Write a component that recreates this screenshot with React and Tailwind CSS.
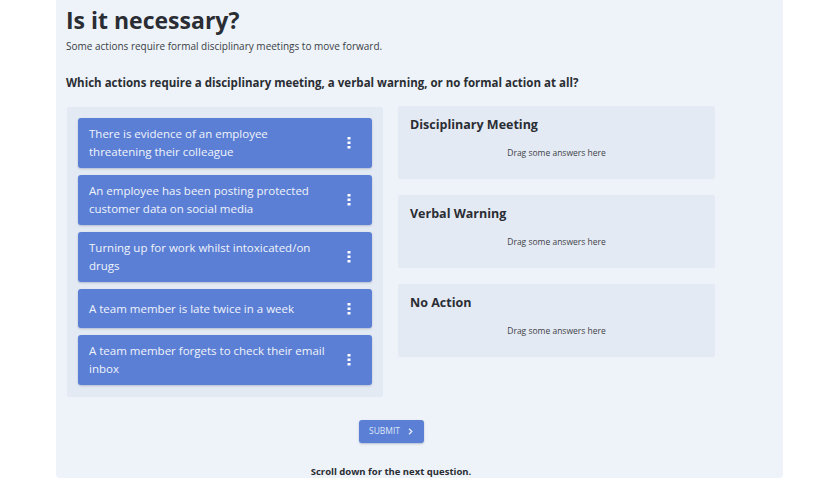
const items = [
  'There is evidence of an employee threatening their colleague',
  'An employee has been posting protected customer data on social media',
  'Turning up for work whilst intoxicated/on drugs',
  'A team member is late twice in a week',
  'A team member forgets to check their email inbox',
];

const buckets = ['Disciplinary Meeting', 'Verbal Warning', 'No Action'];

function Dots() {
  return (
    <svg width="4" height="12" viewBox="0 0 4 12" className="shrink-0">
      <rect x="0.5" y="0" width="3" height="2.5" fill="#ffffff" />
      <rect x="0.5" y="4.5" width="3" height="2.5" fill="#ffffff" />
      <rect x="0.5" y="9" width="3" height="2.5" fill="#ffffff" />
    </svg>
  );
}

export default function App() {
  return (
    <div className="h-[480px] w-[840px] bg-white font-['Open_Sans',sans-serif] text-[#2b2f36]">
      <div className="ml-[56px] h-[478px] w-[727px] rounded-b-[4px] bg-[#eef3f9] pl-[10px] pt-[4px]">
        <h1 className="text-[23px] font-bold leading-[32px] text-[#2a2d33]">Is it necessary?</h1>
        <p className="mt-[3px] text-[10px] leading-[14px] text-[#3a3e45]">
          Some actions require formal disciplinary meetings to move forward.
        </p>
        <p className="mt-[22px] text-[11.5px] font-bold leading-[16px] text-[#2a2d33]">
          Which actions require a disciplinary meeting, a verbal warning, or no formal action at all?
        </p>

        <div className="mt-[16px] ml-[1px] flex items-start gap-[15px]">
          <div className="flex w-[316px] flex-col gap-[7px] rounded-[2px] bg-[#e4eaf3] p-[11px] pb-[12px]">
            {items.map((text) => (
              <div
                key={text}
                className="flex min-h-[39px] items-center justify-between rounded-[3px] bg-[#5b7fd5] py-[7px] pl-[11px] pr-[21px] shadow-[0_1px_2px_rgba(40,60,110,0.25)]"
              >
                <span className="w-[238px] text-[11.5px] leading-[18px] text-[#f1f4fb]">{text}</span>
                <Dots />
              </div>
            ))}
          </div>

          <div className="-mt-[1px] flex w-[317px] flex-col gap-[16px]">
            {buckets.map((title) => (
              <div key={title} className="h-[73px] rounded-[2px] bg-[#e4eaf3] px-[12px] pt-[11px]">
                <div className="text-[12.5px] font-bold leading-[16px] text-[#2a2d33]">{title}</div>
                <div className="mt-[14px] text-center text-[8.5px] leading-[12px] text-[#3f434a]">
                  Drag some answers here
                </div>
              </div>
            ))}
          </div>
        </div>

        <div className="mt-[23px] flex w-[650px] justify-center">
          <button className="flex h-[23px] w-[65px] items-center justify-center gap-[8px] rounded-[3px] bg-[#5b7fd5] text-[8.5px] text-[#dfe6f7] shadow-[0_1px_2px_rgba(40,60,110,0.3)]">
            SUBMIT
            <svg width="5" height="7" viewBox="0 0 5 7">
              <path d="M1 0.8 L3.8 3.5 L1 6.2" fill="none" stroke="#e6ecf8" strokeWidth="1.3" />
            </svg>
          </button>
        </div>

        <p className="mt-[23px] w-[650px] text-center text-[9.5px] font-bold leading-[12px] text-[#2a2d33]">
          Scroll down for the next question.
        </p>
      </div>
    </div>
  );
}
